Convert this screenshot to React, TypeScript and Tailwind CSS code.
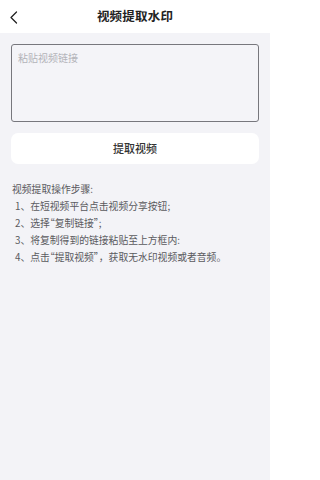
import type { ReactNode } from "react"

// narrow punctuation glyphs, like the proportional quotes in the reference
function P({ children }: { children: ReactNode }) {
  return <span className="[font-feature-settings:'palt']">{children}</span>
}

export default function App() {
  const steps: ReactNode[] = [
    <>1、在短视频平台点击视频分享按钮;</>,
    <>
      2、选择<P>“</P>复制链接<P>”</P>;
    </>,
    <>3、将复制得到的链接粘贴至上方框内:</>,
    <>
      4、点击<P>“</P>提取视频<P>”</P>，获取无水印视频或者音频。
    </>,
  ]

  return (
    <div
      className="w-[270px] h-[480px] bg-[#f3f3f7] flex flex-col"
      style={{ fontFamily: '"Noto Sans CJK SC", "Noto Sans", sans-serif' }}
    >
      {/* header */}
      <div className="relative h-[33px] bg-white flex items-center justify-center shrink-0">
        <svg className="absolute left-[9px] top-[11px]" width="10" height="13" viewBox="0 0 10 13" fill="none">
          <polyline points="7.5,1 2,6.5 7.5,12" stroke="#222" strokeWidth="1.3" strokeLinecap="round" strokeLinejoin="round" />
        </svg>
        <span className="text-[12.5px] font-bold text-[#222] tracking-[0.2px]">视频提取水印</span>
      </div>

      <div className="px-[11px] pt-[11px] flex flex-col">
        <textarea
          placeholder="粘贴视频链接"
          className="h-[78px] w-full resize-none rounded-[3px] border border-[#77777d] bg-[#f4f4f8] px-[6px] py-[5px] text-[10px] leading-[16px] text-[#333] placeholder:text-[#b3b3b8] outline-none"
        />

        <button className="mt-[11px] h-[31px] w-full rounded-[7px] bg-white text-[11px] font-medium text-[#333]">
          提取视频
        </button>
      </div>

      <div className="px-[12px] mt-[17px] text-[9.8px] leading-[17px] text-[#5a5a5e]">
        <div>视频提取操作步骤:</div>
        {steps.map((s, i) => (
          <div key={i} className="pl-[3px]">
            {s}
          </div>
        ))}
      </div>
    </div>
  )
}
